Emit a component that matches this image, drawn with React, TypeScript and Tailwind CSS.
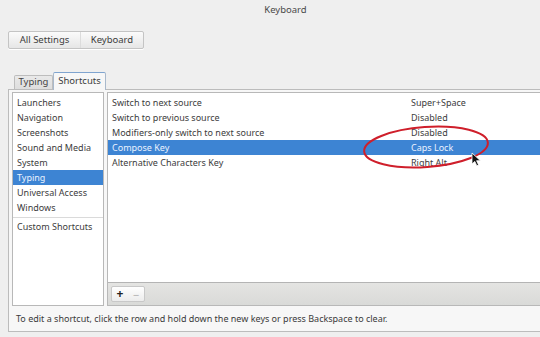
import React from "react";

const categories = [
  "Launchers",
  "Navigation",
  "Screenshots",
  "Sound and Media",
  "System",
  "Typing",
  "Universal Access",
  "Windows",
];

const shortcuts = [
  { name: "Switch to next source", key: "Super+Space" },
  { name: "Switch to previous source", key: "Disabled" },
  { name: "Modifiers-only switch to next source", key: "Disabled" },
  { name: "Compose Key", key: "Caps Lock" },
  { name: "Alternative Characters Key", key: "Right Alt" },
];

const font = { fontFamily: '"Noto Sans", "Open Sans", sans-serif' };

export default function App() {
  return (
    <div
      className="relative h-[337px] w-[540px] overflow-hidden bg-[#efefef] text-[9px] text-[#3c3c3c]"
      style={font}
    >
      {/* title */}
      <div className="flex h-[20px] items-center justify-center pl-[31px] text-[9.5px] text-[#4a4a4a]">
        Keyboard
      </div>

      {/* breadcrumb */}
      <div className="ml-[8px] mt-[11px] flex h-[18px] w-[136px] overflow-hidden rounded-[2px] border border-[#c4c4c4] bg-gradient-to-b from-[#fbfbfb] to-[#e6e6e6] text-[9.5px] shadow-[0_1px_0_#ffffff]">
        <div className="flex w-[72px] items-center justify-center border-r border-[#dcdcdc]">
          All Settings
        </div>
        <div className="flex flex-1 items-center justify-center">Keyboard</div>
      </div>

      {/* tabs */}
      <div className="ml-[14px] mt-[23px] flex h-[17px] items-end text-[9.5px]">
        <div className="flex h-[14px] w-[39px] items-center justify-center rounded-t-[2px] border border-b-0 border-[#bdbdbd] bg-gradient-to-b from-[#e9e9e9] to-[#dedede] text-[#444]">
          Typing
        </div>
        <div className="relative z-10 -mb-px flex h-[18px] w-[53px] items-center justify-center rounded-t-[2px] border border-b-0 border-[#a9b9cc] border-t-[#7fa4cf] bg-[#f7f7f7]">
          Shortcuts
        </div>
      </div>

      {/* notebook panel */}
      <div className="ml-[8px] flex h-[243px] w-[560px] flex-col border border-[#bcbcbc] bg-[#f7f7f7]">
        <div className="flex gap-[3px] px-[3px] pt-[2px]">
          {/* left list */}
          <div className="flex h-[214px] w-[92px] flex-col border border-[#b8b8b8] bg-white pt-[2px]">
            {categories.map((c) => (
              <div
                key={c}
                className={
                  c === "Typing"
                    ? "flex h-[15px] items-center bg-[#3d84d3] pl-[4px] text-[#eaf2ff]"
                    : "flex h-[15px] items-center pl-[4px]"
                }
              >
                {c}
              </div>
            ))}
            <div className="mt-[2px] border-t border-[#dadada]" />
            <div className="flex h-[17px] items-center pl-[4px]">Custom Shortcuts</div>
          </div>

          {/* right pane */}
          <div className="flex h-[214px] flex-1 flex-col border border-r-0 border-[#b8b8b8]">
            <div className="flex-1 bg-white pt-[2px]">
              {shortcuts.map((s) => (
                <div
                  key={s.name}
                  className={
                    s.name === "Compose Key"
                      ? "flex h-[15px] items-center bg-[#3d84d3] text-[#eaf2ff]"
                      : "flex h-[15px] items-center"
                  }
                >
                  <div className="w-[303px] pl-[4px]">{s.name}</div>
                  <div>{s.key}</div>
                </div>
              ))}
            </div>
            <div className="flex h-[23px] items-center border-t border-[#b4b4b4] bg-gradient-to-b from-[#e4e4e2] to-[#d9dad8] pl-[3px]">
              <div className="flex h-[16px] w-[34px] overflow-hidden rounded-[2px] border border-[#c8c8c8] bg-gradient-to-b from-white to-[#ececec]">
                <div className="flex w-[17px] items-center justify-center text-[12px] font-bold leading-none text-[#222]">
                  +
                </div>
                <div className="flex w-[17px] items-center justify-center text-[11px] leading-none text-[#b0b0b0]">
                  −
                </div>
              </div>
            </div>
          </div>
        </div>

        {/* hint */}
        <div className="flex flex-1 items-center pl-[7px] text-[#3a3a3a]">
          To edit a shortcut, click the row and hold down the new keys or press Backspace to clear.
        </div>
      </div>

      {/* red annotation ellipse */}
      <svg
        className="pointer-events-none absolute left-[360px] top-[123px]"
        width="132"
        height="50"
        viewBox="0 0 132 50"
      >
        <ellipse
          cx="66"
          cy="24"
          rx="62"
          ry="20"
          transform="rotate(-4 66 24)"
          fill="none"
          stroke="#cf1f2b"
          strokeWidth="2"
        />
      </svg>

      {/* mouse pointer */}
      <svg
        className="pointer-events-none absolute left-[471px] top-[152px]"
        width="11"
        height="15"
        viewBox="0 0 11 15"
      >
        <path
          d="M1 1 L1 12 L3.8 9.4 L5.8 13.8 L7.6 13 L5.6 8.7 L9.4 8.7 Z"
          fill="#111"
          stroke="#fff"
          strokeWidth="0.8"
          strokeLinejoin="round"
        />
      </svg>
    </div>
  );
}
